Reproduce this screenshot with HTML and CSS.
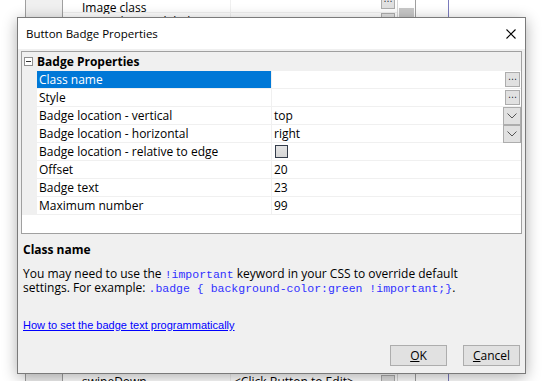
FILE: index.html
```html
<!DOCTYPE html>
<html>
<head>
<meta charset="utf-8">
<title>Button Badge Properties</title>
<link rel="stylesheet" href="styles.css">
</head>
<body>
<div class="app">
  <div class="app-a"></div>
  <div class="app-b"></div>
  <div class="app-main">
    <div class="brow first"><span class="bname">Image class</span><span class="bval"></span><span class="bbtn"><span class="dots">⋯</span></span></div>
    <div class="brow"><span class="bname">Expand/Insert label</span><span class="bval"></span><span class="bbtn"><span class="dots">⋯</span></span></div>
    <div class="brow"><span class="bname">Icon</span><span class="bval"></span><span class="bbtn"></span></div>
    <div class="brow"><span class="bname">Icon class</span><span class="bval"></span><span class="bbtn"></span></div>
    <div class="brow"><span class="bname">Label</span><span class="bval"></span><span class="bbtn"></span></div>
    <div class="brow"><span class="bname">Link</span><span class="bval"></span><span class="bbtn"></span></div>
    <div class="brow"><span class="bname">Name</span><span class="bval"></span><span class="bbtn"></span></div>
    <div class="brow"><span class="bname">Style</span><span class="bval"></span><span class="bbtn"></span></div>
    <div class="brow"><span class="bname">Target</span><span class="bval"></span><span class="bbtn"></span></div>
    <div class="brow"><span class="bname">Tooltip</span><span class="bval"></span><span class="bbtn"></span></div>
    <div class="brow"><span class="bname">Visible</span><span class="bval"></span><span class="bbtn"></span></div>
    <div class="brow"><span class="bname">click</span><span class="bval"></span><span class="bbtn"></span></div>
    <div class="brow"><span class="bname">dblclick</span><span class="bval"></span><span class="bbtn"></span></div>
    <div class="brow"><span class="bname">mousedown</span><span class="bval"></span><span class="bbtn"></span></div>
    <div class="brow"><span class="bname">mouseup</span><span class="bval"></span><span class="bbtn"></span></div>
    <div class="brow"><span class="bname">tap</span><span class="bval"></span><span class="bbtn"></span></div>
    <div class="brow"><span class="bname">taphold</span><span class="bval"></span><span class="bbtn"></span></div>
    <div class="brow"><span class="bname">swipe</span><span class="bval"></span><span class="bbtn"></span></div>
    <div class="brow"><span class="bname">swipeLeft</span><span class="bval"></span><span class="bbtn"></span></div>
    <div class="brow"><span class="bname">swipeRight</span><span class="bval"></span><span class="bbtn"></span></div>
    <div class="brow"><span class="bname">swipeUp</span><span class="bval"></span><span class="bbtn"></span></div>
    <div class="brow last"><span class="bname">swipeDown</span><span class="bval">&lt;Click Button to Edit&gt;</span><span class="bbtn"><span class="dots">⋯</span></span></div>
  </div>
  <div class="app-scroll"><div class="thumb"></div></div>
  <div class="app-c"></div>
  <div class="app-d"></div>
</div>

<div class="dialog">
  <div class="titlebar">
    <span class="title">Button Badge Properties</span>
    <svg class="close" width="10" height="10" viewBox="0 0 10 10"><path d="M0.5 0.5 L9.5 9.5 M9.5 0.5 L0.5 9.5" stroke="#000" stroke-width="1.1" fill="none"/></svg>
  </div>
  <div class="dbody">
    <div class="pgrid">
      <div class="cat"><span class="minus"></span><span class="cat-name">Badge Properties</span></div>
      <div class="prow"><span class="margin"></span><span class="pname sel">Class name</span><span class="pval"><span class="pv-text"></span><span class="ell">⋯</span></span></div>
      <div class="prow"><span class="margin"></span><span class="pname">Style</span><span class="pval"><span class="pv-text"></span><span class="ell">⋯</span></span></div>
      <div class="prow"><span class="margin"></span><span class="pname">Badge location - vertical</span><span class="pval"><span class="pv-text">top</span><span class="drop"><svg width="10" height="6" viewBox="0 0 10 6"><path d="M0.5 0.5 L5 5 L9.5 0.5" stroke="#555" stroke-width="1" fill="none"/></svg></span></span></div>
      <div class="prow"><span class="margin"></span><span class="pname">Badge location - horizontal</span><span class="pval"><span class="pv-text">right</span><span class="drop"><svg width="10" height="6" viewBox="0 0 10 6"><path d="M0.5 0.5 L5 5 L9.5 0.5" stroke="#555" stroke-width="1" fill="none"/></svg></span></span></div>
      <div class="prow"><span class="margin"></span><span class="pname">Badge location - relative to edge</span><span class="pval"><span class="check"></span></span></div>
      <div class="prow"><span class="margin"></span><span class="pname">Offset</span><span class="pval"><span class="pv-text">20</span></span></div>
      <div class="prow"><span class="margin"></span><span class="pname">Badge text</span><span class="pval"><span class="pv-text">23</span></span></div>
      <div class="prow"><span class="margin"></span><span class="pname">Maximum number</span><span class="pval"><span class="pv-text">99</span></span></div>
    </div>
    <div class="desc-title">Class name</div>
    <p class="desc">You may need to use the <code>!important</code> keyword in your CSS to override default settings. For example: <code>.badge { background-color:green !important;}</code>.</p>
    <a class="link" href="#">How to set the badge text programmatically</a>
    <div class="buttons">
      <button class="btn"><u>O</u>K</button>
      <button class="btn"><u>C</u>ancel</button>
    </div>
  </div>
</div>
</body>
</html>
```

FILE: styles.css
```css
* { box-sizing: border-box; }
html, body { margin: 0; padding: 0; }
body {
  width: 546px;
  height: 381px;
  overflow: hidden;
  position: relative;
  background: #fff;
  font-family: "Open Sans", "Noto Sans", sans-serif;
  font-size: 12px;
  color: #000;
}

/* background application */
.app { display: flex; height: 381px; }
.app-a { width: 26px; border-right: 1px solid #a0a0a0; background: #fff; }
.app-b { width: 37px; border-right: 1px solid #a0a0a0; background: #f0f0f0; }
.app-main { width: 334px; display: flex; flex-direction: column; }
.app-scroll { width: 19px; border-left: 1px solid #d8d8d8; border-right: 1px solid #a0a0a0; padding: 8px 1px 0 1px; }
.thumb { height: 120px; background: #c8c8c8; }
.app-c { width: 33px; border-right: 1px solid #7b7bbd; }
.app-d { flex: 1; }

.brow { display: flex; height: 18px; flex: none; border-bottom: 1px solid #f0f0f0; line-height: 17px; }
.brow.first { height: 13px; line-height: 12px; }
.brow.first .bname { position: relative; top: 2px; }
.bname { width: 167px; padding-left: 19px; white-space: nowrap; overflow: hidden; }
.bval { width: 150px; padding-left: 3px; border-left: 1px solid #f0f0f0; white-space: nowrap; }
.bbtn { width: 17px; padding-left: 1px; }
.brow.first .bbtn { margin-top: -6px; }
.brow.last .bbtn { padding-top: 2px; }
.dots {
  display: block; width: 14px; height: 15px; background: #e1e1e1; border: 1px solid #adadad;
  font-family: "DejaVu Sans", sans-serif; font-size: 9px; line-height: 13px; text-align: center; color: #223;
}

/* dialog */
.dialog {
  position: absolute;
  left: 17px;
  top: 17px;
  width: 509px;
  height: 357px;
  border: 1px solid #7a7a7a;
  background: #f0f0f0;
  box-shadow: 0 3px 14px rgba(0, 0, 0, 0.32);
  display: flex;
  flex-direction: column;
}
.titlebar {
  height: 31px;
  flex: none;
  background: #fff;
  display: flex;
  align-items: center;
  padding-left: 8px;
  padding-right: 9px;
}
.title { flex: 1; font-size: 11.5px; line-height: 16px; }
.close { display: block; margin-top: 1px; }

.dbody {
  flex: 1;
  display: flex;
  flex-direction: column;
  padding: 2px 3px 7px 3px;
}

.pgrid {
  height: 183px;
  flex: none;
  border: 1px solid #a0a0a0;
  background: #fff;
}
.cat {
  height: 19px;
  background: #f0f0f0;
  display: flex;
  align-items: center;
}
.minus {
  width: 9px; height: 9px; margin-left: 2px; margin-right: 4px;
  border: 1px solid #8f8f8f; background: #fff; position: relative;
}
.minus::after {
  content: ""; position: absolute; left: 1px; top: 3px; width: 5px; height: 1px; background: #333;
}
.cat-name { font-weight: bold; font-size: 12px; line-height: 16px; }

.prow { display: flex; height: 18px; border-bottom: 1px solid #f0f0f0; }
.margin { width: 15px; background: #f0f0f0; flex: none; margin-bottom: -1px; }
.pname {
  width: 234px; flex: none; padding-left: 2px; line-height: 17px; white-space: nowrap; overflow: hidden;
}
.pname.sel { background: #0078d7; color: #fff; }
.pval {
  flex: 1; display: flex; align-items: center; border-left: 1px solid #f0f0f0; padding-left: 2px; position: relative;
}
.pv-text { flex: 1; line-height: 17px; }
.ell {
  width: 15px; height: 15px; margin-right: 1px; background: #e1e1e1; border: 1px solid #adadad;
  font-family: "DejaVu Sans", sans-serif; font-size: 9px; line-height: 13px; text-align: center; color: #223;
}
.drop {
  position: absolute; right: 0; top: 0; width: 18px; height: 18px;
  background: #e1e1e1; border: 1px solid #adadad;
  display: flex; align-items: center; justify-content: center;
}
.check {
  width: 13px; height: 13px; border: 1px solid #333c4a;
  background: linear-gradient(#e4e4e4, #d6d6d6);
  margin-left: 1px;
}

.desc-title { font-weight: bold; font-size: 12px; margin: 8px 0 0 2px; line-height: 15px; }
.desc { margin: 10px 0 0 2px; line-height: 14px; padding-right: 30px; font-size: 12px; }
.desc code { font-family: "Liberation Mono", "Courier New", monospace; font-size: 11.5px; line-height: 10px; color: #3030ff; }
.link { margin: 23px 0 0 2px; color: #0000ff; line-height: 14px; align-self: flex-start; font-family: "Liberation Sans", Arial, sans-serif; font-size: 11px; }

.buttons { margin-top: auto; display: flex; justify-content: flex-end; gap: 16px; padding-right: 2px; }
.btn {
  width: 57px; height: 21px; background: #e1e1e1; border: 1px solid #adadad;
  font-family: inherit; font-size: 12px; padding: 0; color: #000;
}
.btn u { text-decoration: underline; }
```
